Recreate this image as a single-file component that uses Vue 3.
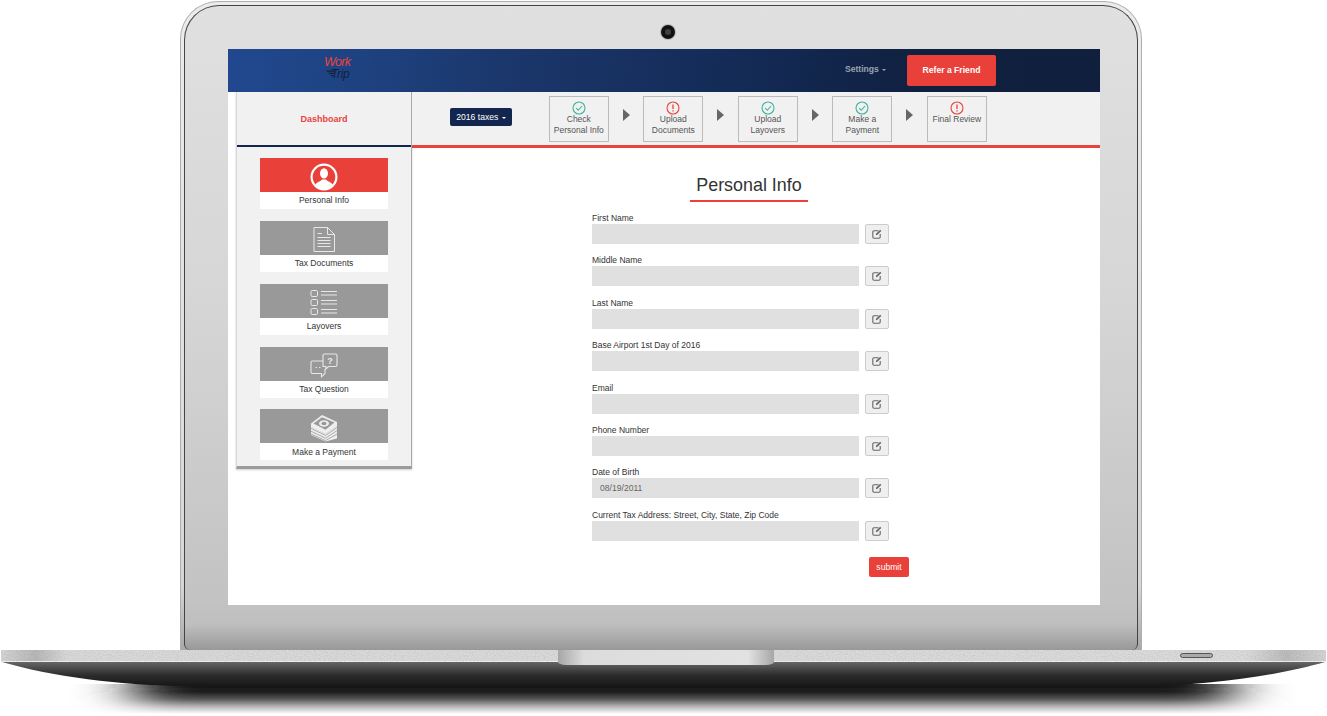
<script setup>
const steps = [
  { lines: ['Check', 'Personal Info'], ok: true },
  { lines: ['Upload', 'Documents'], ok: false },
  { lines: ['Upload', 'Layovers'], ok: true },
  { lines: ['Make a', 'Payment'], ok: true },
  { lines: ['Final Review'], ok: false },
]
const nav = [
  { label: 'Personal Info', icon: 'person', active: true },
  { label: 'Tax Documents', icon: 'doc' },
  { label: 'Layovers', icon: 'list' },
  { label: 'Tax Question', icon: 'chat' },
  { label: 'Make a Payment', icon: 'money' },
]
const fields = [
  { label: 'First Name' },
  { label: 'Middle Name' },
  { label: 'Last Name' },
  { label: 'Base Airport 1st Day of 2016' },
  { label: 'Email' },
  { label: 'Phone Number' },
  { label: 'Date of Birth', value: '08/19/2011' },
  { label: 'Current Tax Address: Street, City, State, Zip Code' },
]
</script>

<template>
  <div class="stage">
    <div class="lid">
      <div class="bezel">
        <div class="camera"><span></span></div>
        <div class="screen">
          <header class="topbar">
            <div class="logo">
              <span class="logo-work">Work</span>
              <span class="logo-trip">
                <svg width="9" height="8" viewBox="0 0 9 8"><path d="M0 0.5H9L8.4 1.8H1.2ZM2 2.8H8L7.6 4.1H3.4ZM4 5H7.4L6.9 6.8Z" fill="#12203f"/></svg>
                <i>Trip</i>
              </span>
            </div>
            <div class="settings">Settings <b class="caret"></b></div>
            <button class="refer">Refer a Friend</button>
          </header>
          <div class="body">
            <aside class="side">
              <div class="dash">Dashboard</div>
              <nav class="navlist">
                <div v-for="n in nav" :key="n.label" class="navitem" :class="{ active: n.active }">
                  <div class="navicon">
                    <svg v-if="n.icon === 'person'" width="28" height="28" viewBox="0 0 28 28">
                      <circle cx="14" cy="14" r="12.4" fill="none" stroke="#fff" stroke-width="2.2"/>
                      <ellipse cx="14" cy="10.4" rx="4" ry="5.2" fill="#fff"/>
                      <path d="M4.8 22.4C6 19.2 10.4 19 12 16.6h4C17.6 19 22 19.2 23.2 22.4A12 12 0 0 1 4.8 22.4Z" fill="#fff"/>
                    </svg>
                    <svg v-else-if="n.icon === 'doc'" width="24" height="27" viewBox="0 0 24 27" fill="none" stroke="#e8e8e8">
                      <path d="M2 1.5H15.5L22.5 8.5V25.5H2Z"/>
                      <path d="M15.5 1.5V8.5H22.5"/>
                      <path d="M5.5 7.5H10M5.5 11.5H18.5M5.5 14.5H18.5M5.5 17.5H18.5M5.5 20.5H18.5"/>
                    </svg>
                    <svg v-else-if="n.icon === 'list'" width="28" height="27" viewBox="0 0 28 27" fill="none" stroke="#e8e8e8">
                      <rect x="1" y="1.5" width="6.5" height="6" rx="1.2"/>
                      <rect x="1" y="10.5" width="6.5" height="6" rx="1.2"/>
                      <rect x="1" y="19.5" width="6.5" height="6" rx="1.2"/>
                      <path d="M11 2.5H27M11 6H27M11 11.5H27M11 15H27M11 20.5H27M11 24H27"/>
                    </svg>
                    <svg v-else-if="n.icon === 'chat'" width="28" height="25" viewBox="0 0 28 25" fill="none" stroke="#e8e8e8" stroke-width="1.1">
                      <path d="M13 13.5V2.5Q13 1 14.5 1H25.5Q27 1 27 2.5V12Q27 13.5 25.5 13.5H18.5L15.8 16V13.5Z" />
                      <path d="M13 8H2.5Q1 8 1 9.5V19Q1 20.5 2.5 20.5H11.5V23.8L15 20.5V16"/>
                      <text x="20" y="10.5" text-anchor="middle" class="q">?</text>
                      <path d="M5.5 14.5H7M9 14.5H10.5" stroke-width="1.2"/>
                    </svg>
                    <svg v-else width="28" height="28" viewBox="0 0 28 28">
                      <path d="M1 9.5 12 1 27 8 27 12 15.5 20 1 13Z" fill="#eee"/>
                      <path d="M3.5 9.5 12 3.2 24.5 8.6 15.5 15.8Z" fill="#999"/>
                      <ellipse cx="14" cy="9.5" rx="5" ry="3.2" fill="#eee"/>
                      <ellipse cx="14" cy="9.5" rx="2.6" ry="1.7" fill="#999"/>
                      <path d="M1 13 15.5 20 27 12V15.2L15.5 23 1 16Z M1 16 15.5 23 27 15.2 27 24.5 15.5 27.5 1 21Z" fill="#eee"/>
                      <path d="M1 14.4 15.5 21.4 27 13.6M1 17.2 15.5 24.2 27 16.6M1 20 15.5 26.6 27 20" fill="none" stroke="#999" stroke-width=".8"/>
                    </svg>
                  </div>
                  <div class="navlabel">{{ n.label }}</div>
                </div>
              </nav>
            </aside>
            <main class="main">
              <div class="stepbar">
                <button class="year">2016 taxes <b class="caret white"></b></button>
                <div class="steps">
                  <template v-for="(s, i) in steps" :key="i">
                    <div class="step">
                      <svg v-if="s.ok" width="14" height="14" viewBox="0 0 14 14" fill="none" stroke="#3eb59c">
                        <circle cx="7" cy="7" r="6" stroke-width="1.1"/>
                        <path d="M4.2 7.2 6.3 9.3 10 5" stroke-width="1.1"/>
                      </svg>
                      <svg v-else width="14" height="14" viewBox="0 0 14 14" fill="none" stroke="#e8433d">
                        <circle cx="7" cy="7" r="6" stroke-width="1.1"/>
                        <path d="M7 3.4V8M7 9.2V10.6" stroke-width="1.3"/>
                      </svg>
                      <div class="step-text"><div v-for="l in s.lines" :key="l">{{ l }}</div></div>
                    </div>
                    <span v-if="i < steps.length - 1" class="arrow"></span>
                  </template>
                </div>
              </div>
              <div class="content">
                <h1 class="title">Personal Info</h1>
                <form class="form">
                  <div v-for="f in fields" :key="f.label" class="field">
                    <label>{{ f.label }}</label>
                    <div class="row">
                      <input class="input" readonly :value="f.value || ''" />
                      <button type="button" class="edit">
                        <svg width="10" height="10" viewBox="0 0 10 10" fill="none" stroke="#666" stroke-width="1.1">
                          <path d="M6.5 1.8H2Q.8 1.8 .8 3V8Q.8 9.2 2 9.2H7Q8.2 9.2 8.2 8V5"/>
                          <path d="M3.8 6.2 4.2 4.6 8.2 .8 9.3 1.9 5.4 5.8Z" fill="#666" stroke="none"/>
                        </svg>
                      </button>
                    </div>
                  </div>
                  <button type="button" class="submit">submit</button>
                </form>
              </div>
            </main>
          </div>
        </div>
      </div>
    </div>
    <div class="base">
      <svg class="grain" width="1327" height="15">
        <filter id="grainf"><feTurbulence type="fractalNoise" baseFrequency="0.9" numOctaves="2" seed="3"/><feColorMatrix values="0 0 0 0 0  0 0 0 0 0  0 0 0 0 0  0 0 0 .6 -.2"/></filter>
        <rect width="1327" height="15" filter="url(#grainf)" opacity=".28"/>
      </svg>
      <div class="notch"></div>
      <div class="slot"></div>
    </div>
    <svg class="under" width="1327" height="54" viewBox="0 0 1327 54">
      <defs>
        <linearGradient id="dark" x1="0" y1="0" x2="0" y2="1">
          <stop offset="0" stop-color="#666"/>
          <stop offset=".55" stop-color="#2c2c2c"/>
          <stop offset="1" stop-color="#171717"/>
        </linearGradient>
        <linearGradient id="fade" x1="0" y1="0" x2="0" y2="1">
          <stop offset="0" stop-color="#161616"/>
          <stop offset=".25" stop-color="#1c1c1c"/>
          <stop offset=".5" stop-color="#555"/>
          <stop offset=".75" stop-color="#b5b5b5"/>
          <stop offset="1" stop-color="#fff"/>
        </linearGradient>
        <filter id="soft" x="-10%" width="120%"><feGaussianBlur stdDeviation="28 0"/></filter>
        <clipPath id="shadowclip"><rect x="0" y="22" width="1327" height="32"/></clipPath>
      </defs>
      <g clip-path="url(#shadowclip)">
        <rect x="135" y="22" width="1095" height="30" fill="url(#fade)" filter="url(#soft)"/>
      </g>
      <path d="M2 0H1325C1280 13 1210 24 1140 24H190C120 24 50 14 2 0Z" fill="url(#dark)"/>
    </svg>
  </div>
</template>

<style scoped>
.stage {
  width: 1327px;
  height: 716px;
  overflow: hidden;
  display: flex;
  flex-direction: column;
  font-family: "Liberation Sans", Arial, sans-serif;
  background: #fff;
}
.lid {
  flex: none;
  box-sizing: border-box;
  width: 962px;
  height: 649px;
  margin: 1px 0 0 180px;
  padding: 3px 3px 0;
  border: 1px solid #aeaeae;
  border-bottom: 0;
  border-radius: 38px 38px 0 0;
  background: linear-gradient(#ececec, #d6d6d6 90%, #a8a8a8);
  display: flex;
}
.bezel {
  flex: 1;
  box-sizing: border-box;
  padding: 19px 37px 45px 43px;
  border: 1px solid #444;
  border-bottom: 0;
  border-radius: 35px 35px 6px 6px;
  background: linear-gradient(180deg, #e0e0e0 0%, #d6d6d6 45%, #c3c3c3 92%, #bfbfbf 96%, #989898 100%);
  display: flex;
  flex-direction: column;
}
.camera {
  width: 14px;
  height: 14px;
  margin: 0 0 10px 433px;
  border-radius: 50%;
  background: #111;
  box-shadow: 0 0 0 1px #bbb;
  display: flex;
  align-items: center;
  justify-content: center;
}
.camera span {
  width: 6px;
  height: 6px;
  border-radius: 50%;
  background: #3a3f4a;
}
.screen {
  width: 872px;
  height: 556px;
  background: #fff;
  display: flex;
  flex-direction: column;
  overflow: hidden;
}
.topbar {
  flex: none;
  height: 43px;
  background: linear-gradient(95deg, #21488f 0%, #1f4484 12%, #1a3568 35%, #132a55 60%, #10203f 80%, #0f1f3d 100%);
  display: flex;
  align-items: center;
}
.logo {
  width: 40px;
  margin: 0 0 5px 96px;
  display: flex;
  flex-direction: column;
  font-style: italic;
  line-height: 12px;
  font-size: 12.5px;
}
.logo-work {
  color: #e8433d;
  letter-spacing: -.7px;
}
.logo-trip {
  color: #12203f;
  display: flex;
  align-items: flex-start;
  margin-left: 2px;
  font-size: 12px;
  letter-spacing: -.4px;
  line-height: 12px;
}
.logo-trip svg {
  flex: none;
  margin-top: 2px;
}
.logo-trip i { margin-left: -4px; }
.settings {
  margin: 0 0 3px 481px;
  width: 62px;
  color: #9aa3b2;
  font-size: 8.6px;
  font-weight: 700;
}
.caret {
  display: inline-block;
  width: 0;
  height: 0;
  margin-left: 1px;
  vertical-align: 1px;
  border-top: 2.5px solid #9aa3b2;
  border-left: 2.5px solid transparent;
  border-right: 2.5px solid transparent;
}
.caret.white { border-top-color: #fff; }
.refer {
  width: 89px;
  height: 31px;
  padding: 0 0 1px;
  border: 0;
  border-radius: 2px;
  background: #ea403a;
  color: #fff;
  font: 700 8.6px "Liberation Sans", Arial, sans-serif;
}
.body {
  flex: 1;
  display: flex;
  align-items: flex-start;
  padding-left: 8px;
}
.side {
  box-sizing: border-box;
  flex: none;
  width: 176px;
  height: 377px;
  background: #f1f1f1;
  border-left: 1px solid #d8d8d8;
  border-right: 1px solid #a9a9a9;
  border-bottom: 3px solid #9c9c9c;
  box-shadow: 0 1px 2px rgba(0, 0, 0, .2);
}
.dash {
  box-sizing: border-box;
  height: 55px;
  border-bottom: 2px solid #12264f;
  display: flex;
  align-items: center;
  justify-content: center;
  color: #e8433d;
  font-size: 9px;
  font-weight: 700;
}
.navlist {
  display: flex;
  flex-direction: column;
  gap: 11.85px;
  padding: 11px 0 0 23px;
}
.navitem {
  width: 128px;
  height: 51px;
  background: #fff;
  display: flex;
  flex-direction: column;
}
.navicon {
  box-sizing: border-box;
  height: 34px;
  padding-top: 4px;
  background: #999;
  display: flex;
  align-items: center;
  justify-content: center;
}
.navitem.active .navicon { background: #ea403a; }
.navlabel {
  flex: 1;
  display: flex;
  align-items: center;
  justify-content: center;
  padding-bottom: .6px;
  font-size: 8.5px;
  color: #333;
}
.q {
  font: 700 9px "Liberation Sans", Arial, sans-serif;
  fill: #eee;
  stroke: none;
}
.main {
  flex: 1;
  min-width: 0;
}
.stepbar {
  box-sizing: border-box;
  height: 56px;
  background: #f1f1f1;
  border-bottom: 3px solid #e8433d;
  display: flex;
  align-items: flex-start;
  padding: 4px 0 0 38px;
}
.year {
  width: 62px;
  height: 18px;
  margin-top: 12px;
  padding: 0 0 1px;
  border: 0;
  border-radius: 2px;
  background: #12264f;
  color: #fff;
  font: 8.6px "Liberation Sans", Arial, sans-serif;
}
.steps {
  display: flex;
  align-items: flex-start;
  margin-left: 36.8px;
}
.step {
  box-sizing: border-box;
  width: 60px;
  height: 46px;
  border: 1px solid #bbb;
  display: flex;
  flex-direction: column;
  align-items: center;
  padding-top: 4px;
  color: #555;
  font-size: 8.5px;
  line-height: 11.5px;
  text-align: center;
}
.step svg {
  flex: none;
  margin-bottom: -1.5px;
}
.arrow {
  width: 0;
  height: 0;
  margin: 13px 13.5px 0 14px;
  border-left: 7px solid #666;
  border-top: 6.5px solid transparent;
  border-bottom: 6.5px solid transparent;
}
.content {
  padding: 25px 0 0 180px;
}
.title {
  box-sizing: border-box;
  width: 118px;
  height: 29px;
  margin: 0 0 -.4px 98px;
  border-bottom: 2px solid #ee3f3a;
  color: #333;
  font-size: 17.9px;
  font-weight: 400;
  line-height: 24px;
  text-align: center;
  white-space: nowrap;
}
.form {
  display: flex;
  flex-direction: column;
}
.field {
  height: 42.4px;
  display: flex;
  flex-direction: column;
  justify-content: flex-end;
}
.field label {
  height: 12px;
  font-size: 8.5px;
  color: #333;
  line-height: 12px;
}
.row {
  height: 20px;
  display: flex;
  gap: 6px;
}
.input {
  box-sizing: border-box;
  width: 267px;
  height: 20px;
  padding: 0 8px;
  border: 0;
  background: #e0e0e0;
  color: #666;
  font: 8.6px "Liberation Sans", Arial, sans-serif;
  outline: none;
}
.edit {
  box-sizing: border-box;
  width: 24px;
  height: 20px;
  padding: 0;
  border: 1px solid #ccc;
  border-radius: 2px;
  background: #efefef;
  display: flex;
  align-items: center;
  justify-content: center;
}
.submit {
  width: 40px;
  height: 20px;
  margin: 16px 0 0 277px;
  padding: 0;
  border: 0;
  border-radius: 2px;
  background: #ea403a;
  color: #fff;
  font: 8.6px "Liberation Sans", Arial, sans-serif;
}
.base {
  flex: none;
  height: 12px;
  margin-left: 1px;
  width: 1325px;
  position: relative;
  border-radius: 1px;
  background: linear-gradient(90deg, #d6d6d6 0, #b9b9b9 2.6%, #dadada 5%, #dcdcdc 94%, #bdbdbd 97%, #d6d6d6 100%);
  box-shadow: inset 0 -1px 0 #f1f1f1;
}
.grain {
  position: absolute;
  left: 0;
  top: 0;
  width: 100%;
  height: 12px;
}
.notch {
  position: absolute;
  left: 557px;
  top: 0;
  width: 216px;
  height: 15px;
  border-radius: 0 0 8px 8px / 0 0 3px 3px;
  background: linear-gradient(90deg, #a6a6a6 0, #dcdcdc 12%, #e2e2e2 88%, #a6a6a6 100%);
}
.slot {
  position: absolute;
  left: 1179px;
  top: 3px;
  width: 33px;
  height: 5px;
  box-sizing: border-box;
  border: 1px solid #555;
  border-radius: 3px;
  background: #aaa;
}
.under {
  flex: none;
  display: block;
}
</style>

<style>
html, body { background: #fff; overflow: hidden; }
</style>
